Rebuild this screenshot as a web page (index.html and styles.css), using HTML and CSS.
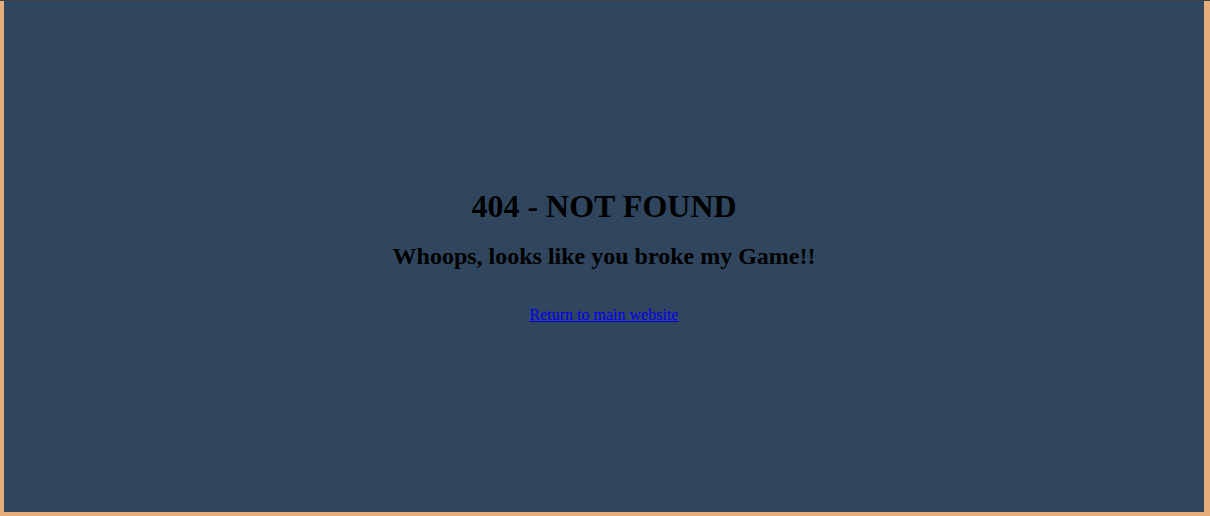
FILE: index.html
```html
<!DOCTYPE html>
<html>
<head>
<meta charset="utf-8">
<title>404 - Not Found</title>
<link rel="stylesheet" href="styles.css">
</head>
<body>
<div class="topline"></div>
<div class="frame">
  <main class="panel">
    <h1 class="title">404 - NOT FOUND</h1>
    <h2 class="subtitle">Whoops, looks like you broke my Game!!</h2>
    <p class="back"><a href="#">Return to main website</a></p>
  </main>
</div>
</body>
</html>
```
FILE: styles.css
```css
html, body {
  margin: 0;
  padding: 0;
  background: #e6af7b;
  font-family: "Liberation Serif", "Times New Roman", serif;
}
.topline {
  height: 1px;
  background: #414141;
}
.frame {
  padding: 0 6px 4px 4px;
}
.panel {
  box-sizing: border-box;
  height: 511px;
  padding-bottom: 2px;
  background: #30465e;
  display: flex;
  flex-direction: column;
  align-items: center;
  justify-content: center;
  color: #000;
  text-align: center;
}
.title {
  font-size: 32px;
  font-weight: bold;
  margin: 0;
}
.subtitle {
  font-size: 24px;
  font-weight: bold;
  margin: 18px 0 0;
}
.back {
  font-size: 16px;
  margin: 36px 0 0;
}
.back a {
  color: #0000ee;
}
```
